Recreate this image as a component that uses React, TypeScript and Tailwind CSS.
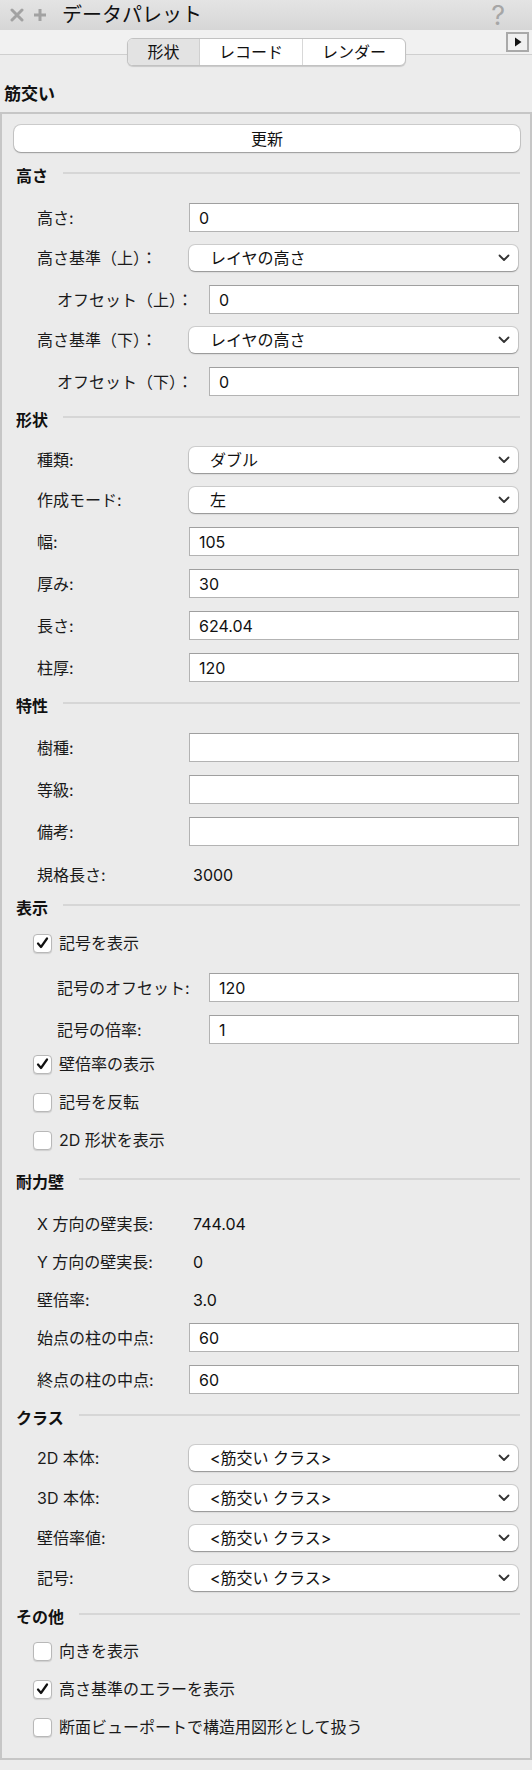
import React from 'react'

const font = { fontFamily: 'Inter, "Noto Sans CJK JP", sans-serif' }

function Chevron() {
  return (
    <svg width="12" height="8" viewBox="0 0 12 8" className="shrink-0">
      <path d="M1.5 1.5 L6 6 L10.5 1.5" fill="none" stroke="#333" strokeWidth="1.8" strokeLinecap="round" strokeLinejoin="round" />
    </svg>
  )
}

function Heading({ text, mt }: { text: string; mt: string }) {
  return (
    <div className={`flex items-center h-[20px] ${mt}`}>
      <span className="font-bold text-[16px] leading-none text-[#111]">{text}</span>
      <div className="flex-1 ml-[15px] h-[2px] bg-[#d6d6d6] mb-[6px]" />
    </div>
  )
}

function Field({ label, value, mt, indent }: { label: string; value: string; mt: string; indent?: boolean }) {
  return (
    <div className={`flex items-center h-[29px] ${indent ? 'pl-[41px]' : 'pl-[21px]'} ${mt}`}>
      <span className="w-[152px] shrink-0 text-[16px] text-[#1a1a1a]">{label}</span>
      <div className="flex-1 mr-[1px] h-[29px] bg-white border border-[#b3b3b3] border-t-[#9f9f9f] flex items-center px-[9px] text-[16px] text-[#111]">
        {value}
      </div>
    </div>
  )
}

function Select({ label, value, mt }: { label: string; value: string; mt: string }) {
  return (
    <div className={`flex items-center h-[26px] pl-[21px] ${mt}`}>
      <span className="w-[152px] shrink-0 text-[16px] text-[#1a1a1a]">{label}</span>
      <div className="flex-1 mr-[2px] h-[26px] bg-white rounded-[6px] shadow-[0_0_0_1px_rgba(0,0,0,0.12),0_1px_1.5px_rgba(0,0,0,0.3)] flex items-center pl-[21px] pr-[8px] text-[16px] text-[#111]">
        <span className="flex-1">{value}</span>
        <Chevron />
      </div>
    </div>
  )
}

function Static({ label, value, mt }: { label: string; value: string; mt: string }) {
  return (
    <div className={`flex items-center h-[20px] pl-[21px] ${mt}`}>
      <span className="w-[156px] shrink-0 text-[16px] text-[#1a1a1a]">{label}</span>
      <span className="text-[16px] text-[#111]">{value}</span>
    </div>
  )
}

function Check({ label, checked, mt }: { label: string; checked?: boolean; mt: string }) {
  return (
    <div className={`flex items-center h-[20px] pl-[17px] ${mt}`}>
      <div className="w-[19px] h-[19px] rounded-[4px] bg-white border border-[#b8b8b8] shadow-[0_1px_1px_rgba(0,0,0,0.12)] flex items-center justify-center">
        {checked && (
          <svg width="13" height="12" viewBox="0 0 13 12">
            <path d="M2 6.5 L5 10 L11 1.5" fill="none" stroke="#111" strokeWidth="2.2" strokeLinecap="round" strokeLinejoin="round" />
          </svg>
        )}
      </div>
      <span className="ml-[7px] text-[16px] text-[#1a1a1a]">{label}</span>
    </div>
  )
}

export default function App() {
  return (
    <div className="w-[532px] h-[1770px] bg-[#ececec] overflow-hidden" style={font}>
      {/* title bar */}
      <div className="h-[30px] flex items-center bg-gradient-to-b from-[#e4e4e4] to-[#d6d6d6] pl-[10px] pr-[27px]">
        <svg width="14" height="14" viewBox="0 0 14 14">
          <path d="M2 2 L12 12 M12 2 L2 12" stroke="#a2a2a2" strokeWidth="3" strokeLinecap="round" />
        </svg>
        <svg width="14" height="14" viewBox="0 0 14 14" className="ml-[9px]">
          <path d="M7 1 L7 13 M1 7 L13 7" stroke="#a2a2a2" strokeWidth="3" />
        </svg>
        <span className="ml-[15px] text-[20px] text-[#111] leading-none">データパレット</span>
        <span className="ml-auto text-[27px] leading-none text-[#a6a6a6]">?</span>
      </div>

      {/* tab strip */}
      <div className="relative h-[25px] bg-[#f1f1f1] border-b border-[#cfcfcf]">
        <div className="absolute left-[127px] top-[8px] h-[28px] w-[279px] flex rounded-[6px] bg-white border border-[#c2c2c2] shadow-[0_1px_1px_rgba(0,0,0,0.15)] overflow-hidden text-[16px] text-[#111]">
          <div className="w-[72px] flex items-center justify-center bg-[#e3e3e3] border-r border-[#d0d0d0]">形状</div>
          <div className="w-[103px] flex items-center justify-center border-r border-[#d8d8d8]">レコード</div>
          <div className="flex-1 flex items-center justify-center">レンダー</div>
        </div>
        <div className="absolute left-[506px] top-[2px] w-[23px] h-[20px] border-2 border-[#a9a9a9] bg-[#f0f0f0] flex items-center justify-center">
          <svg width="8" height="10" viewBox="0 0 8 10">
            <path d="M1 0.5 L7.5 5 L1 9.5 Z" fill="#111" />
          </svg>
        </div>
      </div>

      <div className="h-[57px] flex items-end pl-[4px] pb-[9px]">
        <span className="font-bold text-[17px] leading-none text-[#111]">筋交い</span>
      </div>

      {/* panel */}
      <div className="border-2 border-[#c6c6c6] bg-[#ebebeb] pl-[14px] pr-[10px] pb-[21px]">
        <div className="mt-[11px] ml-[-2px] h-[27px] rounded-[7px] bg-white shadow-[0_0_0_1px_rgba(0,0,0,0.13),0_1px_1.5px_rgba(0,0,0,0.25)] flex items-center justify-center text-[16px] text-[#111]">
          更新
        </div>

        <Heading text="高さ" mt="mt-[14px]" />
        <Field label="高さ:" value="0" mt="mt-[17px]" />
        <Select label="高さ基準（上）：" value="レイヤの高さ" mt="mt-[13px]" />
        <Field label="オフセット（上）：" value="0" mt="mt-[14px]" indent />
        <Select label="高さ基準（下）：" value="レイヤの高さ" mt="mt-[13px]" />
        <Field label="オフセット（下）：" value="0" mt="mt-[14px]" indent />

        <Heading text="形状" mt="mt-[14px]" />
        <Select label="種類:" value="ダブル" mt="mt-[17px]" />
        <Select label="作成モード:" value="左" mt="mt-[14px]" />
        <Field label="幅:" value="105" mt="mt-[14px]" />
        <Field label="厚み:" value="30" mt="mt-[13px]" />
        <Field label="長さ:" value="624.04" mt="mt-[13px]" />
        <Field label="柱厚:" value="120" mt="mt-[13px]" />

        <Heading text="特性" mt="mt-[14px]" />
        <Field label="樹種:" value="" mt="mt-[17px]" />
        <Field label="等級:" value="" mt="mt-[13px]" />
        <Field label="備考:" value="" mt="mt-[13px]" />
        <Static label="規格長さ:" value="3000" mt="mt-[19px]" />

        <Heading text="表示" mt="mt-[13px]" />
        <Check label="記号を表示" checked mt="mt-[15px]" />
        <Field label="記号のオフセット:" value="120" mt="mt-[20px]" indent />
        <Field label="記号の倍率:" value="1" mt="mt-[13px]" indent />
        <Check label="壁倍率の表示" checked mt="mt-[10px]" />
        <Check label="記号を反転" mt="mt-[18px]" />
        <Check label="2D 形状を表示" mt="mt-[18px]" />

        <Heading text="耐力壁" mt="mt-[22px]" />
        <Static label="X 方向の壁実長:" value="744.04" mt="mt-[22px]" />
        <Static label="Y 方向の壁実長:" value="0" mt="mt-[18px]" />
        <Static label="壁倍率:" value="3.0" mt="mt-[18px]" />
        <Field label="始点の柱の中点:" value="60" mt="mt-[13px]" />
        <Field label="終点の柱の中点:" value="60" mt="mt-[13px]" />

        <Heading text="クラス" mt="mt-[14px]" />
        <Select label="2D 本体:" value="<筋交い クラス>" mt="mt-[17px]" />
        <Select label="3D 本体:" value="<筋交い クラス>" mt="mt-[14px]" />
        <Select label="壁倍率値:" value="<筋交い クラス>" mt="mt-[14px]" />
        <Select label="記号:" value="<筋交い クラス>" mt="mt-[14px]" />

        <Heading text="その他" mt="mt-[16px]" />
        <Check label="向きを表示" mt="mt-[14px]" />
        <Check label="高さ基準のエラーを表示" checked mt="mt-[18px]" />
        <Check label="断面ビューポートで構造用図形として扱う" mt="mt-[18px]" />
      </div>
    </div>
  )
}
